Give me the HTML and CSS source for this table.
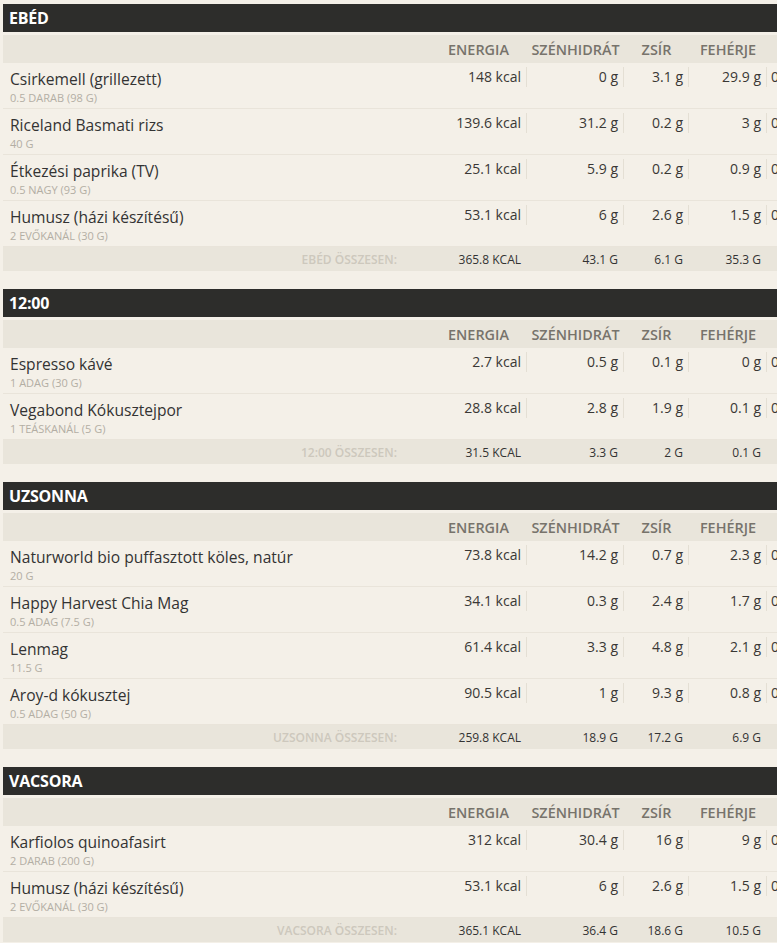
FILE: index.html
```html
<!DOCTYPE html>
<html lang="hu">
<head>
<meta charset="utf-8">
<title>Napló</title>
<link rel="stylesheet" href="styles.css">
</head>
<body>
<div class="page">

<section class="meal">
  <h2 class="meal-title">EBÉD</h2>
  <div class="grid head"><span></span><span>ENERGIA</span><span>SZÉNHIDRÁT</span><span>ZSÍR</span><span>FEHÉRJE</span><span></span></div>
  <div class="grid row">
    <div class="name"><div class="food">Csirkemell (grillezett)</div><div class="amount">0.5 darab (98 g)</div></div>
    <div class="val">148 kcal</div><div class="val">0 g</div><div class="val">3.1 g</div><div class="val">29.9 g</div><div class="val extra">0 g</div>
  </div>
  <div class="grid row">
    <div class="name"><div class="food">Riceland Basmati rizs</div><div class="amount">40 g</div></div>
    <div class="val">139.6 kcal</div><div class="val">31.2 g</div><div class="val">0.2 g</div><div class="val">3 g</div><div class="val extra">0 g</div>
  </div>
  <div class="grid row">
    <div class="name"><div class="food">Étkezési paprika (TV)</div><div class="amount">0.5 nagy (93 g)</div></div>
    <div class="val">25.1 kcal</div><div class="val">5.9 g</div><div class="val">0.2 g</div><div class="val">0.9 g</div><div class="val extra">0 g</div>
  </div>
  <div class="grid row">
    <div class="name"><div class="food">Humusz (házi készítésű)</div><div class="amount">2 evőkanál (30 g)</div></div>
    <div class="val">53.1 kcal</div><div class="val">6 g</div><div class="val">2.6 g</div><div class="val">1.5 g</div><div class="val extra">0 g</div>
  </div>
  <div class="grid total">
    <div class="total-label">Ebéd összesen:</div>
    <div class="tval">365.8 kcal</div><div class="tval">43.1 g</div><div class="tval">6.1 g</div><div class="tval">35.3 g</div><div class="tval"></div>
  </div>
</section>

<section class="meal">
  <h2 class="meal-title">12:00</h2>
  <div class="grid head"><span></span><span>ENERGIA</span><span>SZÉNHIDRÁT</span><span>ZSÍR</span><span>FEHÉRJE</span><span></span></div>
  <div class="grid row">
    <div class="name"><div class="food">Espresso kávé</div><div class="amount">1 adag (30 g)</div></div>
    <div class="val">2.7 kcal</div><div class="val">0.5 g</div><div class="val">0.1 g</div><div class="val">0 g</div><div class="val extra">0 g</div>
  </div>
  <div class="grid row">
    <div class="name"><div class="food">Vegabond Kókusztejpor</div><div class="amount">1 teáskanál (5 g)</div></div>
    <div class="val">28.8 kcal</div><div class="val">2.8 g</div><div class="val">1.9 g</div><div class="val">0.1 g</div><div class="val extra">0 g</div>
  </div>
  <div class="grid total">
    <div class="total-label">12:00 összesen:</div>
    <div class="tval">31.5 kcal</div><div class="tval">3.3 g</div><div class="tval">2 g</div><div class="tval">0.1 g</div><div class="tval"></div>
  </div>
</section>

<section class="meal">
  <h2 class="meal-title">UZSONNA</h2>
  <div class="grid head"><span></span><span>ENERGIA</span><span>SZÉNHIDRÁT</span><span>ZSÍR</span><span>FEHÉRJE</span><span></span></div>
  <div class="grid row">
    <div class="name"><div class="food">Naturworld bio puffasztott köles, natúr</div><div class="amount">20 g</div></div>
    <div class="val">73.8 kcal</div><div class="val">14.2 g</div><div class="val">0.7 g</div><div class="val">2.3 g</div><div class="val extra">0 g</div>
  </div>
  <div class="grid row">
    <div class="name"><div class="food">Happy Harvest Chia Mag</div><div class="amount">0.5 adag (7.5 g)</div></div>
    <div class="val">34.1 kcal</div><div class="val">0.3 g</div><div class="val">2.4 g</div><div class="val">1.7 g</div><div class="val extra">0 g</div>
  </div>
  <div class="grid row">
    <div class="name"><div class="food">Lenmag</div><div class="amount">11.5 g</div></div>
    <div class="val">61.4 kcal</div><div class="val">3.3 g</div><div class="val">4.8 g</div><div class="val">2.1 g</div><div class="val extra">0 g</div>
  </div>
  <div class="grid row">
    <div class="name"><div class="food">Aroy-d kókusztej</div><div class="amount">0.5 adag (50 g)</div></div>
    <div class="val">90.5 kcal</div><div class="val">1 g</div><div class="val">9.3 g</div><div class="val">0.8 g</div><div class="val extra">0 g</div>
  </div>
  <div class="grid total">
    <div class="total-label">Uzsonna összesen:</div>
    <div class="tval">259.8 kcal</div><div class="tval">18.9 g</div><div class="tval">17.2 g</div><div class="tval">6.9 g</div><div class="tval"></div>
  </div>
</section>

<section class="meal">
  <h2 class="meal-title">VACSORA</h2>
  <div class="grid head"><span></span><span>ENERGIA</span><span>SZÉNHIDRÁT</span><span>ZSÍR</span><span>FEHÉRJE</span><span></span></div>
  <div class="grid row">
    <div class="name"><div class="food">Karfiolos quinoafasirt</div><div class="amount">2 darab (200 g)</div></div>
    <div class="val">312 kcal</div><div class="val">30.4 g</div><div class="val">16 g</div><div class="val">9 g</div><div class="val extra">0 g</div>
  </div>
  <div class="grid row">
    <div class="name"><div class="food">Humusz (házi készítésű)</div><div class="amount">2 evőkanál (30 g)</div></div>
    <div class="val">53.1 kcal</div><div class="val">6 g</div><div class="val">2.6 g</div><div class="val">1.5 g</div><div class="val extra">0 g</div>
  </div>
  <div class="grid total">
    <div class="total-label">Vacsora összesen:</div>
    <div class="tval">365.1 kcal</div><div class="tval">36.4 g</div><div class="tval">18.6 g</div><div class="tval">10.5 g</div><div class="tval"></div>
  </div>
</section>

</div>
</body>
</html>
```

FILE: styles.css
```css
html, body {
  margin: 0;
  padding: 0;
  background: #f4f0e8;
  overflow: hidden;
}

body {
  font-family: "Open Sans", "Liberation Sans", sans-serif;
  color: #333;
}

.page {
  padding: 4px 0 0 3px;
  width: 830px;
}

.meal {
  margin-bottom: 18px;
}

.meal-title {
  margin: 0 0 3px 0;
  height: 28px;
  line-height: 28px;
  background: #2d2d2b;
  color: #fff;
  font-size: 16px;
  font-weight: 700;
  padding-left: 6px;
  letter-spacing: -0.2px;
}

.grid {
  display: grid;
  grid-template-columns: 427px 97px 97px 65px 78px 60px;
}

.head {
  height: 28px;
  background: #e9e5db;
  align-items: center;
  font-size: 14.4px;
  font-weight: 600;
  color: #77736b;
  text-align: center;
  padding-top: 1px;
  box-sizing: border-box;
}

.row {
  height: 45px;
  border-bottom: 1px solid #e9e4da;
  background: #f4f0e8;
}

.name {
  padding: 5px 0 0 7px;
  overflow: hidden;
  white-space: nowrap;
}

.food {
  font-size: 15.6px;
  line-height: 22px;
  color: #333;
}

.amount {
  font-size: 11px;
  line-height: 15px;
  color: #b3aea4;
  text-transform: uppercase;
}

.val {
  margin-top: 4px;
  height: 20px;
  line-height: 20px;
  font-size: 14px;
  text-align: right;
  padding-right: 5px;
  border-right: 1px solid #e4dfd4;
  color: #3a3835;
  white-space: nowrap;
}

.val.extra {
  text-align: left;
  padding: 0 0 0 4px;
  border-right: none;
}

.total {
  height: 24px;
  line-height: 25px;
  background: #e9e5db;
}

.total-label {
  text-align: right;
  padding-right: 33px;
  font-size: 12px;
  font-weight: 600;
  color: #cdc8bd;
  text-transform: uppercase;
}

.tval {
  text-align: right;
  padding-right: 6px;
  font-size: 12px;
  color: #333;
  text-transform: uppercase;
  white-space: nowrap;
}
```
